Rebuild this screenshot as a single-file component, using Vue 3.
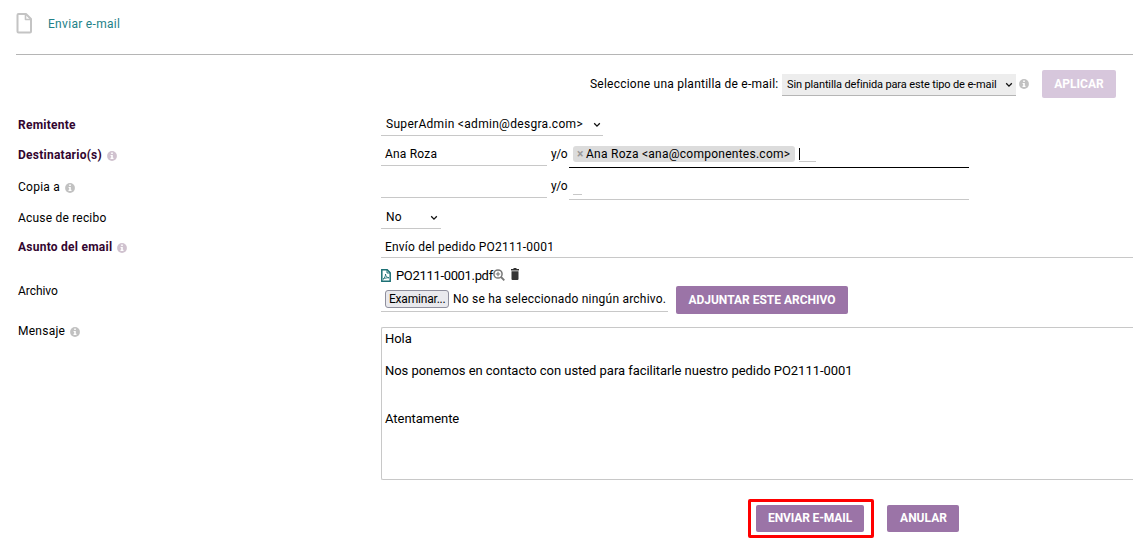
<script setup>
import { h } from 'vue'

const message = 'Hola\n\nNos ponemos en contacto con usted para facilitarle nuestro pedido PO2111-0001\n\n\nAtentamente'

const Info = () =>
  h('svg', { class: 'info', viewBox: '0 0 10 10', width: 10, height: 10 }, [
    h('circle', { cx: 5, cy: 5, r: 4.9, fill: 'currentColor' }),
    h('path', { d: 'M4.2 1.6h1.6v1.3H4.2zM3.6 3.9h2.2v2.9h.7v1.1h-3V6.8h.7V5h-.6z', fill: '#fff' })
  ])
const Chevron = () =>
  h('svg', { class: 'chevron', viewBox: '0 0 8 6', width: 8, height: 6 }, [
    h('path', { d: 'M1.2 1.3L4 4.1l2.800-2.800', fill: 'none', stroke: '#111', 'stroke-width': 1.3 })
  ])
</script>

<template>
  <main class="page">
    <header class="header">
      <svg class="file" width="16" height="21" viewBox="0 0 16 21" fill="none" stroke="#c4c4c4" stroke-width="2" stroke-linejoin="round">
        <path d="M2.5 1H10l5 5v12.500q0 1-1 1H2.500q-1 0-1-1V2q0-1 1-1z" />
        <path d="M9.500 1v5.500H15" stroke-width="1.600" />
      </svg>
      <span class="title">Enviar e-mail</span>
    </header>

    <section class="toolbar">
      <span class="t-select">Seleccione una plantilla de e-mail:</span>
      <div class="template"><span class="t-template">Sin plantilla definida para este tipo de e-mail</span><Chevron /></div>
      <Info />
      <button class="btn apply"><span>APLICAR</span></button>
    </section>

    <section class="form">
      <div class="row r1">
        <label class="bold">Remitente</label>
        <div class="select sender"><span class="t-sender">SuperAdmin &lt;admin@desgra.com&gt;</span><Chevron /></div>
      </div>
      <div class="row r2">
        <label class="bold"><span>Destinatario(s)</span><Info /></label>
        <div class="recipients">
          <div class="input short"><span class="t-ana">Ana Roza</span></div>
          <span class="yo">y/o</span>
          <div class="tags focused">
            <span class="tag"><i>×</i><span class="t-tag">Ana Roza &lt;ana@componentes.com&gt;</span></span>
            <span class="entry active"></span>
          </div>
        </div>
      </div>
      <div class="row r3">
        <label><span>Copia a</span><Info /></label>
        <div class="recipients">
          <div class="input short"></div>
          <span class="yo">y/o</span>
          <div class="tags"><span class="entry"></span></div>
        </div>
      </div>
      <div class="row r4">
        <label>Acuse de recibo</label>
        <div class="select receipt"><span>No</span><Chevron /></div>
      </div>
      <div class="row r5">
        <label class="bold"><span>Asunto del email</span><Info /></label>
        <div class="input"><span class="t-envio">Envío del pedido PO2111-0001</span></div>
      </div>
      <div class="row r6">
        <label class="t-archivo">Archivo</label>
        <div class="files">
          <div class="attachment">
            <svg width="10" height="13" viewBox="0 0 10 13" fill="none" stroke="#1d7075" stroke-width="1.500">
              <path d="M.8.8h5.400l3 3v8.400H.8z" /><path d="M6 .8v3.200h3" stroke-width="1" />
              <path d="M2 10.200C3.500 9 4.700 7 4.500 5c0 2 1.500 3.500 3.500 3.800-2-.2-4 .2-6 1.400z" stroke-width=".9" />
            </svg>
            <span class="t-pdf">PO2111-0001.pdf</span>
            <svg class="magnify" width="12" height="12" viewBox="0 0 12 12" fill="none" stroke="#777">
              <circle cx="5" cy="5" r="4.100" stroke-width="1.500" /><path d="M8 8l3.300 3.300" stroke-width="1.900" /><path d="M2.800 5h4.400M5 2.800v4.400" stroke-width="1.100" />
            </svg>
            <svg class="trash" width="8" height="12" viewBox="0 0 8 12" fill="#333">
              <path d="M2.500 0h3v1H8v1.500H0V1h2.500zM.5 3.200h7V11q0 1-1 1h-5q-1 0-1-1z" />
            </svg>
          </div>
          <div class="upload">
            <div class="picker"><span class="browse">Examinar...</span><span class="t-none">No se ha seleccionado ningún archivo.</span></div>
            <button class="btn attach"><span>ADJUNTAR ESTE ARCHIVO</span></button>
          </div>
        </div>
      </div>
      <div class="row r7">
        <label><span>Mensaje</span><Info /></label>
        <div class="message">{{ message }}</div>
      </div>
    </section>

    <footer class="actions">
      <div class="highlight"><button class="btn send"><span>ENVIAR E-MAIL</span></button></div>
      <button class="btn cancel"><span>ANULAR</span></button>
    </footer>
  </main>
</template>

<style>
body { margin: 0; background: #fff; overflow: hidden; }
</style>

<style scoped>
.page { width: 1133px; height: 546px; overflow: hidden; box-sizing: border-box; background: #fff; color: #000; font: 12px/16px Roboto, "Liberation Sans", sans-serif; white-space: nowrap; }
.page svg { display: block; flex: none; }
.header { margin-left: 16px; height: 54px; border-bottom: 1px solid #b5b5b5; display: flex; align-items: flex-start; box-sizing: content-box; }
.file { margin-top: 13px; }
.title { color: #238188; margin: 16px 0 0 16px; letter-spacing: .3px; }
.toolbar { height: 62px; padding: 15px 17px 0 590px; box-sizing: border-box; display: flex; align-items: flex-start; }
.t-select { width: 192px; margin-top: 6px; letter-spacing: .23px; }
.template { box-sizing: border-box; width: 234px; height: 22px; margin-top: 4px; padding: 0 3px 0 5px; background: #ededed; border-bottom: 1px solid #b5b5b5; display: flex; align-items: center; justify-content: space-between; font-size: 11px; letter-spacing: -.13px; }
.info { color: #c1c1c1; }
.toolbar .info { margin: 9px 13px 0 3px; }
.btn { border: 0; padding: 0; border-radius: 2px; background: #9b74a7; color: #fff; font: bold 12px/16px Roboto, sans-serif; height: 28px; display: block; flex: none; }
.apply { width: 74px; background: #d7c7dc; }
.form { margin-left: 18px; }
.row { display: grid; grid-template-columns: 363px 1fr; align-items: start; box-sizing: border-box; }
label { display: flex; align-items: center; gap: 5px; letter-spacing: .25px; }
label .info { margin-top: 2px; }
.bold { font-weight: bold; color: #32052f; }
.bold .info { color: #d0c2cf; }
.r1 { height: 30px; } .r2 { height: 32px; } .r3 { height: 31px; } .r4 { height: 29px; } .r5 { height: 26px; } .r6 { height: 58px; }
.r6 label { margin-top: 18px; letter-spacing: -.05px; }
.r4 label { letter-spacing: .2px; }
.select, .input { box-sizing: border-box; height: 19px; border-bottom: 1px solid #c8c8c8; line-height: 14px; }
.select { display: flex; justify-content: space-between; padding: 0 2px 0 5px; }
.select .chevron { margin-top: 5px; }
.sender { width: 222px; letter-spacing: .3px; } .receipt { width: 60px; padding-right: 3px; letter-spacing: .3px; }
.input { padding-left: 4px; letter-spacing: .2px; }
.short { width: 166px; }
.recipients { display: flex; align-items: flex-start; }
.yo { width: 18px; margin-left: 4px; line-height: 14px; letter-spacing: -.4px; }
.tags { box-sizing: border-box; width: 400px; height: 21px; border-bottom: 1px solid #c8c8c8; padding-left: 4px; display: flex; align-items: flex-start; }
.focused { border-color: #000; }
.tag { box-sizing: border-box; width: 222px; height: 16px; margin-top: -1px; background: #dcdcdc; border-radius: 3px; padding-left: 4px; line-height: 16px; display: flex; letter-spacing: .26px; }
.tag i { font-style: normal; font-weight: bold; color: #999; width: 9px; }
.entry { width: 9px; height: 15px; border-bottom: 1px solid #c8c8c8; }
.active { box-sizing: border-box; width: 17px; height: 15px; margin: 0 0 0 4px; background: linear-gradient(#000, #000) 0 1px / 1px 12px no-repeat; }
.r5 .input { line-height: 16px; }
.attachment { display: flex; height: 21px; align-items: flex-start; }
.attachment svg:first-child { margin: 4px 5px 0 0; }
.t-pdf { margin-top: 3px; font-size: 13px; width: 97px; letter-spacing: -.33px; }
.magnify { margin-top: 4px; }
.trash { margin: 3px 0 0 6px; }
.upload { display: flex; }
.picker { box-sizing: border-box; width: 287px; height: 26px; border-bottom: 1px solid #c8c8c8; margin-right: 8px; padding: 4px 0 0 4px; display: flex; }
.browse { box-sizing: border-box; width: 64px; height: 18px; border: 1px solid #8f8f9d; border-radius: 3px; background: #e9e9ed; line-height: 17px; padding-left: 3px; margin-right: 4px; letter-spacing: -.2px; }
.t-none { line-height: 19px; letter-spacing: .22px; }
.attach { width: 172px; }
.message { box-sizing: border-box; height: 153px; margin-top: 4px; border: 1px solid #c8c8c8; border-right: 0; border-radius: 2px 0 0 2px; padding: 3px; white-space: pre; font-size: 13px; letter-spacing: -.04px; }
.actions { display: flex; margin: 19px 0 0 748px; }
.highlight { box-sizing: border-box; width: 126px; height: 39px; border: 3px solid #f00; border-radius: 2px; padding: 3px 0 0 5px; }
.send, .cancel { height: 27px; padding-bottom: 1px; }
.send { width: 108px; letter-spacing: -.12px; }
.cancel { width: 72px; margin: 6px 0 0 13px; padding-left: 1px; }
</style>
